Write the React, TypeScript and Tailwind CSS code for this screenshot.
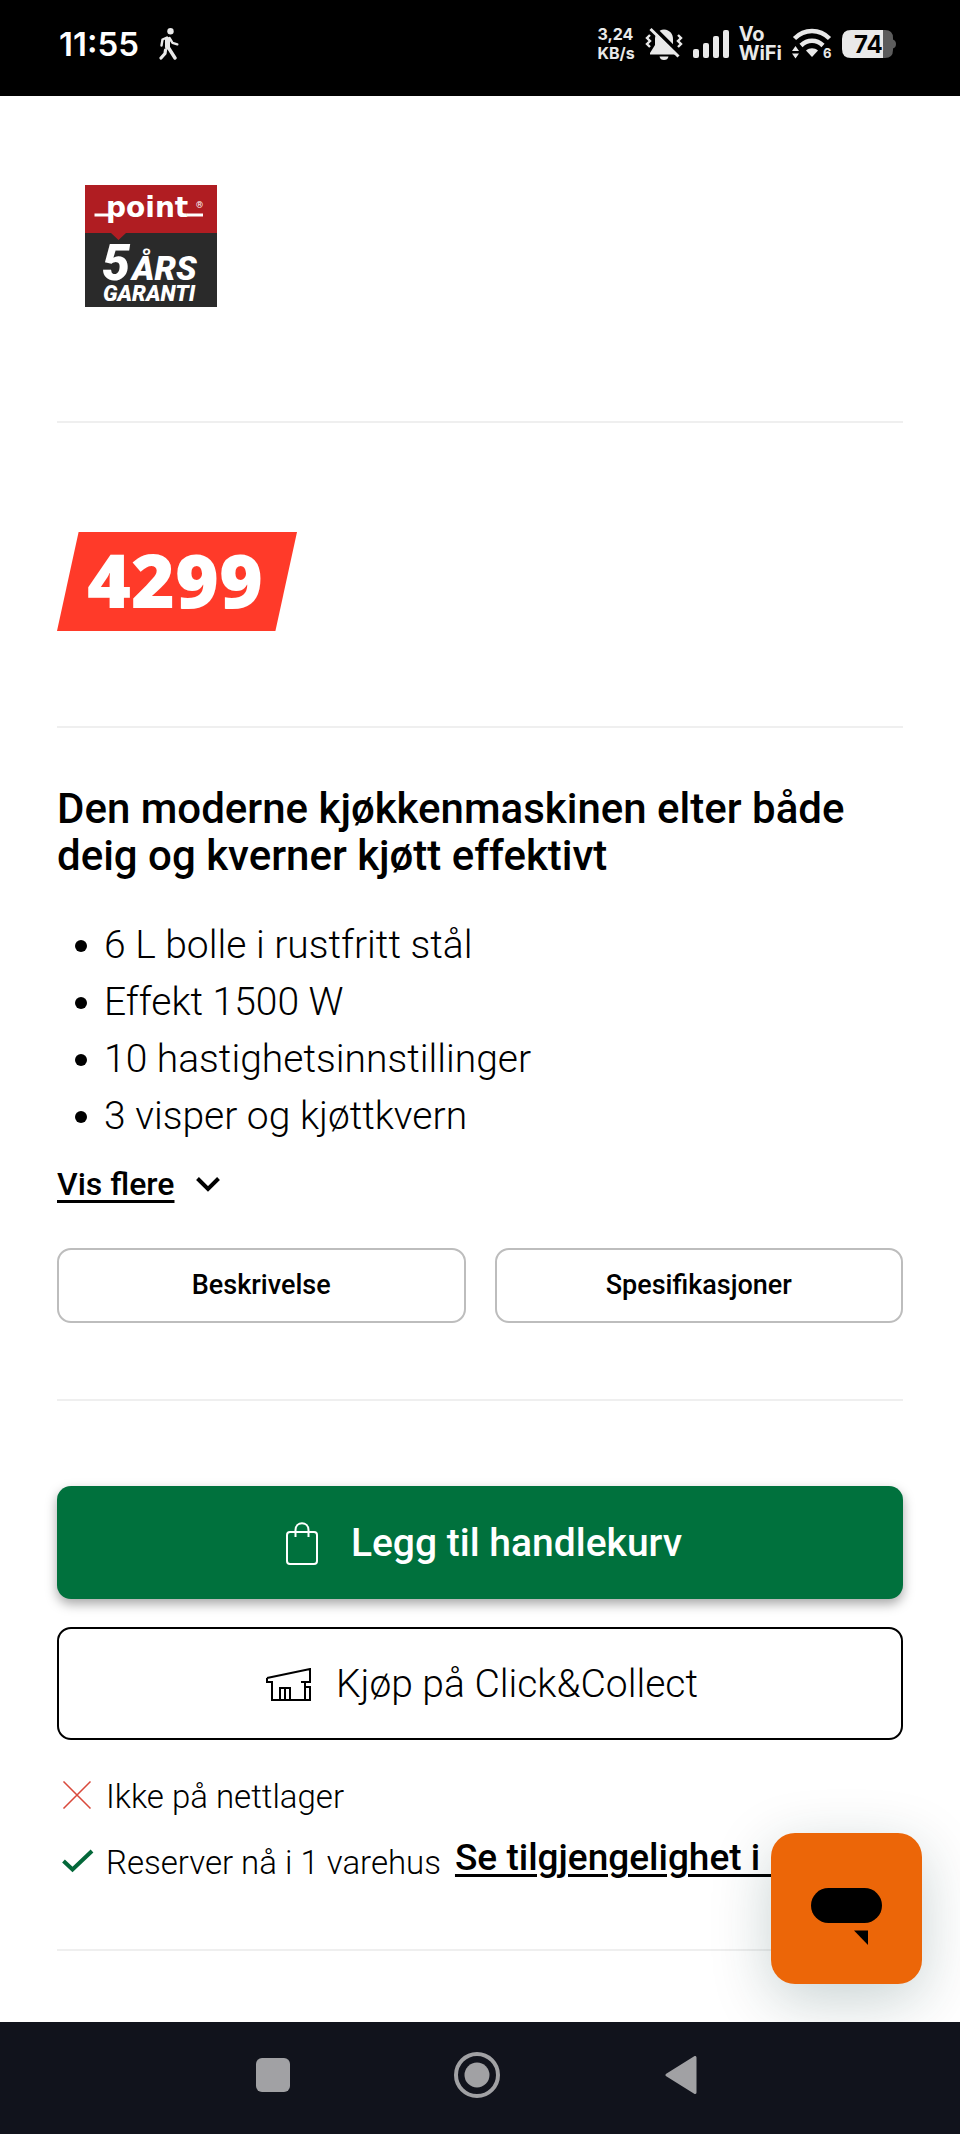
import type { ReactNode } from 'react';

const features = [
  '6 L bolle i rustfritt stål',
  'Effekt 1500 W',
  '10 hastighetsinnstillinger',
  '3 visper og kjøttkvern',
];

const ruleClass = 'border-0 border-t-2 border-[#efefef]';
const tabClass = 'h-[75px] flex-1 rounded-[14px] border-2 border-[#bdbdbd] text-[27px] font-medium';
const ctaClass = 'flex h-[113px] w-full items-center justify-center rounded-[14px] text-[39px]';

function StatusBar() {
  return (
    <header className="flex h-24 items-center justify-between bg-black pb-2 pl-[59px] pr-16 text-[#e9e9e9]">
      <div className="flex items-center gap-5">
        <span className="font-['Inter'] text-[33px] font-semibold leading-none text-white">11:55</span>
        <svg width="20" height="32" viewBox="0 0 20 32" fill="none" stroke="currentColor" strokeLinecap="round" strokeLinejoin="round">
          <circle cx="11.5" cy="3.2" r="3.2" fill="currentColor" stroke="none" />
          <path d="M8.5 11.5 8.5 19" strokeWidth="5" />
          <path d="M8 9.500 3.500 11.500 2.500 17.500" strokeWidth="2.400" />
          <path d="M10.500 10 13.500 14.800 18.300 16.300" strokeWidth="2.400" />
          <path d="M9 19 16 30" strokeWidth="3.400" />
          <path d="M6.500 22 6 25.500 2 30" strokeWidth="3.200" />
        </svg>
      </div>

      <div className="flex items-center gap-2.5">
        <div className="font-['Inter'] text-[16px] font-bold leading-[19px]">
          <p>3,24</p>
          <p>KB/s</p>
        </div>

        <svg width="38" height="34" viewBox="0 0 38 34" fill="none" stroke="currentColor">
          <path d="M19 2.500C13 3 10 7 10 12V18L5 26V27.500H33V26L28 18V12C28 7 25 3 19 2.500Z" fill="currentColor" stroke="none" />
          <path d="M14.500 29.500H23.500C23 32 21.500 33 19 33S15 32 14.500 29.500Z" fill="currentColor" stroke="none" />
          <path d="M8 0 37 29" stroke="#000" strokeWidth="4" />
          <path d="M5.500 2 33.500 29.500" strokeWidth="3" />
          <path d="M5 8 2 11 5 14 2 17 5 20M33 8 36 11 33 14 36 17 33 20" strokeWidth="2.400" />
        </svg>

        <svg width="36" height="28" viewBox="0 0 36 28" fill="currentColor">
          <rect x="0" y="19" width="6" height="9" rx="2" />
          <rect x="10" y="13" width="6" height="15" rx="2" />
          <rect x="20" y="6" width="6" height="22" rx="2" />
          <rect x="30" y="0" width="6" height="28" rx="2" />
        </svg>

        <div className="font-['Inter'] text-[20px] font-bold leading-[19px]">
          <p>Vo</p>
          <p>WiFi</p>
        </div>

        <svg width="40" height="34" viewBox="0 -2 40 34" fill="none" stroke="currentColor">
          <path d="M2.500 9.500C12.500-.5 27.500-.5 37.500 9.500" strokeWidth="4.500" />
          <path d="M9 16.500C15.500 10.300 24.500 10.300 31 16.500" strokeWidth="4.500" />
          <path d="M14 21.500C17.500 18.500 22.500 18.500 26 21.500L20 28Z" fill="currentColor" stroke="none" />
          <path d="M0 22 3.500 17 7 22ZM0 24.500 3.500 29.500 7 24.500Z" fill="currentColor" stroke="none" />
          <text x="31" y="29" className="font-['Inter'] text-[13px] font-bold" fill="currentColor" stroke="none">6</text>
        </svg>

        <svg width="54" height="28" viewBox="0 0 54 28">
          <path d="M40 0H43Q51 0 51 8V9.500Q54 10.500 54 14T51 18.500V20Q51 28 43 28H40Z" fill="#5c5c5c" />
          <path d="M9 0H41V28H9Q0 28 0 19V9Q0 0 9 0Z" fill="#e9e9e9" />
          <text x="12" y="23" className="font-['Inter'] text-[24px] font-bold" fill="#000" stroke="#e9e9e9" strokeWidth="2" paintOrder="stroke">74</text>
        </svg>
      </div>
    </header>
  );
}

function WarrantyBadge() {
  return (
    <svg className="ml-7" width="132" height="122" viewBox="0 0 132 122" role="img" aria-label="point 5 års garanti">
      <rect width="132" height="122" fill="#2a2a2a" />
      <path d="M0 0H132V48H41L33.500 55 26 48H0Z" fill="#b01d22" />
      <path d="M9.500 30H24M102 30H118" stroke="#fff" strokeWidth="3" />
      <text x="21" y="32" fill="#fff" className="font-['DejaVu_Sans'] text-[28px] font-bold">point</text>
      <text x="111" y="23" fill="#fff" className="font-['Roboto'] text-[9px]">®</text>
      <text x="17" y="95" fill="#fff" className="font-['Roboto'] text-[50px] font-black italic">5</text>
      <text x="47" y="95" fill="#fff" className="font-['Roboto'] text-[34px] font-black italic">ÅRS</text>
      <text x="18" y="116" fill="#fff" className="font-['Roboto'] text-[22px] font-black italic">GARANTI</text>
    </svg>
  );
}

function StockRow({ icon, children }: { icon: ReactNode; children: ReactNode }) {
  return (
    <li className="flex h-[66px] items-start whitespace-nowrap pl-[5px]">
      <span className="flex h-[62px] w-[44px] shrink-0 items-center">{icon}</span>
      {children}
    </li>
  );
}

export default function App() {
  return (
    <div className="flex min-h-screen flex-col bg-white font-['Roboto',sans-serif] text-black">
      <StatusBar />

      <main className="flex-1 px-[57px] pt-[89px]">
        <WarrantyBadge />

        <hr className={`mt-[114px] ${ruleClass}`} />

        <div className="mt-[109px] flex h-[99px] w-[240px] items-center justify-center bg-[#ff3a29] pb-1 pr-1 [clip-path:polygon(9%_0,100%_0,91%_100%,0_100%)]">
          <span className="font-['Noto_Sans'] text-[75px] font-black leading-none text-white">4299</span>
        </div>

        <hr className={`mt-[95px] ${ruleClass}`} />

        <h2 className="mt-[57px] text-[42px] font-medium leading-[47px]">
          Den moderne kjøkkenmaskinen elter både deig og kverner kjøtt effektivt
        </h2>

        <ul className="mt-[38px] text-[39px] font-light leading-[57px]">
          {features.map((item) => (
            <li key={item} className="flex items-center pl-[18px]">
              <span className="mr-[17px] h-3 w-3 rounded-full bg-black" />
              {item}
            </li>
          ))}
        </ul>

        <button className="mt-4 flex items-center gap-[22px] text-[32px] font-medium leading-[47px]">
          <span className="underline decoration-3 underline-offset-[5px] [text-decoration-skip-ink:none]">Vis flere</span>
          <svg width="24" height="15" viewBox="0 0 24 15" fill="none" stroke="currentColor" strokeWidth="4">
            <path d="M1.500 1.500 12 12 22.500 1.500" />
          </svg>
        </button>

        <div className="mt-10 flex gap-[29px]">
          <button className={tabClass}>Beskrivelse</button>
          <button className={tabClass}>Spesifikasjoner</button>
        </div>

        <hr className={`mt-[76px] ${ruleClass}`} />

        <button className={`mt-[85px] gap-[33px] bg-[#00713d] pl-2 pt-0.5 font-medium text-white shadow-[0_5px_12px_rgba(0,0,0,0.35)] ${ctaClass}`}>
          <svg width="32" height="43" viewBox="0 0 32 43" fill="none" stroke="currentColor" strokeWidth="2">
            <rect x="1" y="10" width="30" height="32" rx="3" />
            <path d="M9.500 15V8C9.500-1 22.500-1 22.500 8V15" />
          </svg>
          Legg til handlekurv
        </button>

        <button className={`mt-7 gap-[25px] border-2 border-black pl-1 pt-0.5 font-light ${ctaClass}`}>
          <svg width="45" height="33" viewBox="0 0 45 33" fill="none" stroke="currentColor" strokeWidth="2">
            <path d="M1 10 44 1V14H35M1 10V14H6V32H39V14M39 19H44V32H39M14 32V20H24V32M19 20V32" />
          </svg>
          Kjøp på Click&amp;Collect
        </button>

        <ul className="mt-6 text-[33px] font-light leading-[66px]">
          <StockRow
            icon={
              <svg width="30" height="28" viewBox="0 0 30 28" fill="none" stroke="#d9493c" strokeWidth="1.500">
                <path d="M1.500 .5 28.500 27.500M28.500 .5 1.500 27.500" />
              </svg>
            }
          >
            Ikke på nettlager
          </StockRow>
          <StockRow
            icon={
              <svg width="32" height="24" viewBox="0 0 32 24" fill="none" stroke="#04683a" strokeWidth="4">
                <path d="M1.500 12 10.500 20.500 30 2" />
              </svg>
            }
          >
            Reserver nå i 1 varehus
            <a href="#" className="ml-3.5 text-[37px] font-medium leading-14 underline decoration-3 underline-offset-[4px]">
              Se tilgjengelighet i&nbsp;&nbsp;
            </a>
          </StockRow>
        </ul>

        <hr className={`mt-[53px] ${ruleClass}`} />
      </main>

      <button
        aria-label="Chat"
        className="fixed bottom-[150px] right-[38px] z-10 flex h-[151px] w-[151px] items-center justify-center rounded-3xl bg-[#ec6608] pt-4 shadow-[0_16px_60px_rgba(0,50,50,0.22)]"
      >
        <svg width="71" height="57" viewBox="0 0 71 57">
          <rect width="71" height="35" rx="17.500" />
          <path d="M43 42.500H57V57Z" />
        </svg>
      </button>

      <nav className="relative z-20 flex h-28 items-center justify-center gap-[158px] bg-[#11131c] pb-1.5 pr-[7px] text-[#a1a1a4]">
        <button aria-label="Recent apps" className="flex w-[46px] justify-center">
          <span className="h-[34px] w-[34px] rounded-md bg-current" />
        </button>
        <button aria-label="Home" className="flex w-[46px] justify-center">
          <svg width="46" height="46" viewBox="0 0 46 46">
            <circle cx="23" cy="23" r="21" fill="none" stroke="currentColor" strokeWidth="4" />
            <circle cx="23" cy="23" r="12.500" fill="currentColor" />
          </svg>
        </button>
        <button aria-label="Back" className="flex w-[46px] justify-center">
          <svg width="32" height="38" viewBox="0 0 32 38" fill="currentColor" stroke="currentColor" strokeWidth="3" strokeLinejoin="round">
            <path d="M30 1.500V36.500L2 19Z" />
          </svg>
        </button>
      </nav>
    </div>
  );
}
